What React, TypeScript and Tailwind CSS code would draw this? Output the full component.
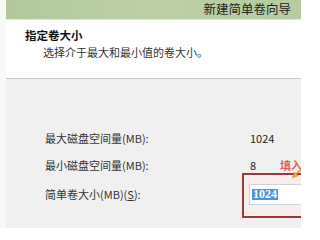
import React from "react";

export default function App() {
  const font = { fontFamily: '"Noto Sans CJK SC", "Liberation Sans", sans-serif' };
  return (
    <div className="w-[301px] h-[228px] overflow-hidden flex bg-white" style={font}>
      <div className="w-[6px] bg-[#f8f9f6] shrink-0" />
      <div className="flex-1 flex flex-col min-w-0">
        <div className="h-[20px] shrink-0 bg-gradient-to-r from-[#b2c89c] via-[#bdd0a6] to-[#b6cb9f] border-b border-[#dfe8d6] flex items-center justify-end pr-[10px]">
          <span className="text-[12.5px] leading-none text-[#222]">新建简单卷向导</span>
        </div>
        <div className="h-[58px] shrink-0 bg-white pl-[19px] pt-[8px]">
          <div className="text-[11.5px] leading-[15px] font-bold text-[#111]">指定卷大小</div>
          <div className="text-[11px] leading-[15px] text-[#333] pl-[18px] mt-[2px]">选择介于最大和最小值的卷大小。</div>
        </div>
        <div className="h-px bg-[#c9c9c9] shrink-0" />
        <div className="flex-1 bg-[#f0f0f0] pl-[39px] pt-[51px] text-[11px] text-[#333] relative overflow-hidden">
          <div className="flex items-center h-[16px]">
            <span className="w-[205px] shrink-0">最大磁盘空间量(MB):</span>
            <span className="text-[#222]">1024</span>
          </div>
          <div className="flex items-center h-[16px] mt-[11px] whitespace-nowrap">
            <span className="w-[205px] shrink-0">最小磁盘空间量(MB):</span>
            <span className="text-[#222] shrink-0">8</span>
            <span className="ml-[24px] shrink-0 text-[#e0605a] font-bold text-[11px]">填入</span>
          </div>
          <div className="flex items-center h-[16px] mt-[13px]">
            <span className="w-[204px] shrink-0">简单卷大小(MB)(<u>S</u>):</span>
            <div className="relative shrink-0">
              <div className="absolute left-[-7px] top-[-11px] w-[70px] h-[45px] border-2 border-[#9a3a3a] bg-[#f7eded]" />
              <div className="relative w-[60px] h-[21px] bg-white border border-[#c6d3e0] flex items-center pl-[2px]">
                <span className="bg-[#4e96dc] text-white text-[12px] font-bold leading-[11px] px-[1px]" style={{ fontFamily: '"Liberation Serif", serif' }}>1024</span>
              </div>
            </div>
          </div>
          <svg className="absolute left-[284px] top-[88px]" width="12" height="13" viewBox="0 0 16 18">
            <path d="M16 1 L8 9 L6 7 L3 15 L11 12 L9 10 L16 4 Z" fill="#f3a82a" stroke="#c97a10" strokeWidth="0.6" />
          </svg>
        </div>
      </div>
    </div>
  );
}
